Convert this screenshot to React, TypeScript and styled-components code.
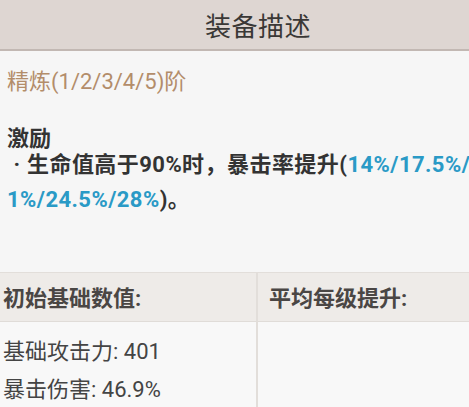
import React from "react";
import styled, { createGlobalStyle } from "styled-components";

const Global = createGlobalStyle`
  html, body {
    margin: 0;
    padding: 0;
    overflow: hidden;
    background: #f6f6f6;
  }
  body {
    font-family: Roboto, "Noto Sans CJK SC", sans-serif;
    color: #333;
  }
`;

const Page = styled.div`
  width: 532px;
  margin-left: -8px;
  background: #f6f6f6;
`;

const TitleBar = styled.header`
  height: 49px;
  background: #ded6d2;
  border-bottom: 2px solid #c2b8b3;
  display: flex;
  align-items: center;
  justify-content: center;
  font-size: 26px;
  color: #3a3836;
  letter-spacing: 0.5px;
`;

const Desc = styled.section`
  padding: 16px 34px 0 15px;
  font-size: 22px;
`;

const Refine = styled.div`
  line-height: 30px;
  color: #b38d6a;
`;

const EffectName = styled.div`
  margin-top: 31px;
  line-height: 22px;
  font-weight: 700;
  color: #333;
`;

const EffectText = styled.p`
  margin: -3px 0 2px;
  line-height: 35px;
  font-weight: 700;
  color: #333;
  letter-spacing: 0.45px;
  word-break: break-all;
`;

const Bullet = styled.span`
  display: inline-block;
  width: 20px;
  text-align: center;
`;

const Value = styled.span`
  color: #2a9ac6;
`;

const Table = styled.div`
  margin-top: 55px;
  display: grid;
  grid-template-columns: 266px 266px;
  border-top: 1px solid #e2deda;
`;

const HeadCell = styled.div<{ $last?: boolean }>`
  height: 49px;
  display: flex;
  align-items: center;
  padding: 0 0 2px 11px;
  box-sizing: border-box;
  background: #eeebe8;
  border-bottom: 1px solid #e0dcd8;
  border-right: ${(p) => (p.$last ? "none" : "2px solid #e2deda")};
  font-size: 22px;
  font-weight: 700;
  color: #4a4644;
`;

const BodyCell = styled.div<{ $last?: boolean }>`
  padding: 11px 0 0 11px;
  min-height: 100px;
  background: #f8f8f8;
  border-right: ${(p) => (p.$last ? "none" : "2px solid #e2deda")};
  font-size: 22px;
  color: #444;
`;

const StatLine = styled.div`
  line-height: 38px;
`;

export default function App() {
  return (
    <>
      <Global />
      <Page>
        <TitleBar>装备描述</TitleBar>
        <Desc>
          <Refine>精炼(1/2/3/4/5)阶</Refine>
          <EffectName>激励</EffectName>
          <EffectText>
            <Bullet>·</Bullet>生命值高于90%时，暴击率提升(
            <Value>14%/17.5%/21%/24.5%/28%</Value>)。
          </EffectText>
        </Desc>
        <Table>
          <HeadCell>初始基础数值:</HeadCell>
          <HeadCell $last>平均每级提升:</HeadCell>
          <BodyCell>
            <StatLine>基础攻击力: 401</StatLine>
            <StatLine>暴击伤害: 46.9%</StatLine>
          </BodyCell>
          <BodyCell $last />
        </Table>
      </Page>
    </>
  );
}
